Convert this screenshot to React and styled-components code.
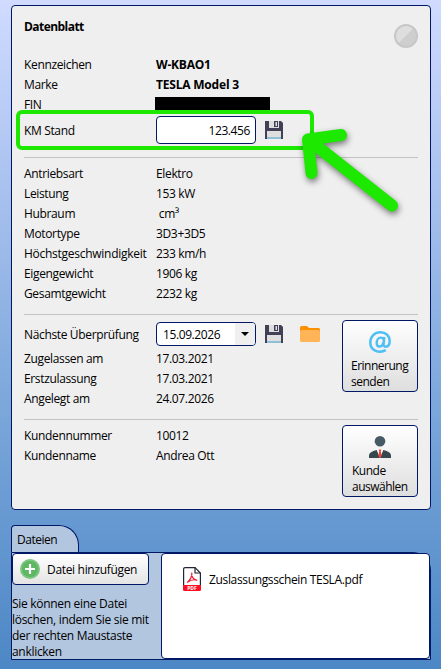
import React from 'react'
import styled, { createGlobalStyle } from 'styled-components'

const navy = '#001866'
const green = '#1de800'

const GlobalStyle = createGlobalStyle`
    * {
        box-sizing: border-box;
    }
    body {
        margin: 0;
        font-family: "Open Sans", "Noto Sans", sans-serif;
        font-size: 12px;
        letter-spacing: -0.3px;
        color: #000;
    }
    svg {
        display: block;
        flex: none;
    }
`
const Page = styled.div`
    height: 669px;
    padding: 5px 10px 9px 11px;
    overflow: hidden;
    background: linear-gradient(#d0dbff 0%, #a2bdec 33%, #7aa6da 62%, #4c87c5 100%);
`
const Card = styled.section`
    position: relative;
    height: 505px;
    padding: 0 12px;
    border: 1px solid ${navy};
    border-radius: 4px;
    background: #efefef;
`
const CardHeader = styled.header`
    display: flex;
    justify-content: space-between;
    height: 48px;
    padding-top: 11px;
`
const Title = styled.h1`
    margin: 0;
    font-size: 12px;
    line-height: 20px;
    font-weight: 700;
    letter-spacing: -0.55px;
`
const Status = styled.span`
    width: 24px;
    height: 24px;
    margin-top: 7px;
    border: 2px solid #c7c7c7;
    border-radius: 50%;
    background: linear-gradient(135deg, #dedede 50%, #cecece 50%);
`
const Section = styled.div`
    display: flex;
    justify-content: space-between;
    height: ${p => p.$height}px;
    padding-top: ${p => p.$top}px;
    border-bottom: ${p => (p.$last ? 'none' : '1px solid #c3c3c3')};
`
const Rows = styled.div`
    flex: 1;
`
const Row = styled.div`
    display: grid;
    grid-template-columns: 132px 1fr;
    align-items: center;
    height: ${p => p.$height || 20}px;
    white-space: pre;
`
const Label = styled.span`
    padding-top: 2px;
    line-height: 18px;
    letter-spacing: ${p => p.$spacing || -0.35}px;
`
const Value = styled.span`
    padding-top: 2px;
    line-height: 18px;
    font-weight: ${p => (p.$bold ? 700 : 400)};
    letter-spacing: ${p => (p.$bold ? -0.2 : -0.35)}px;
`
const Redacted = styled.span`
    align-self: end;
    width: 115px;
    height: 17px;
    margin-left: -1px;
    background: #000;
`
const Controls = styled.div`
    display: flex;
    align-items: center;
`
const Field = styled.div`
    display: flex;
    align-items: center;
    justify-content: ${p => (p.$numeric ? 'flex-end' : 'space-between')};
    width: 100px;
    height: ${p => p.$height}px;
    padding: ${p => (p.$numeric ? '0 5px 0 0' : '0 0 0 6px')};
    border: 1px solid ${navy};
    border-radius: 4px;
    background: #fff;
    letter-spacing: -0.4px;
    overflow: hidden;
`
const Drop = styled.span`
    display: flex;
    align-items: center;
    justify-content: center;
    width: 20px;
    height: 100%;
    background: #efefef;
`
const IconSlot = styled.span`
    margin-left: ${p => p.$gap}px;
`
const TileButton = styled.button`
    width: 76px;
    height: 72px;
    padding: 8px 0 0 ${p => p.$left}px;
    border: 1px solid ${navy};
    border-radius: 4px;
    background: linear-gradient(#fff, #dedede);
    font: inherit;
    line-height: 16px;
    letter-spacing: -0.5px;
    text-align: left;
    white-space: pre-line;
    svg {
        margin: 0 0 5px ${p => 26 - p.$left}px;
    }
`
const Highlight = styled.div`
    position: absolute;
    left: 4px;
    top: 104px;
    width: 298px;
    height: 40px;
    border: 4px solid ${green};
    border-radius: 6px;
`
const Arrow = styled.svg`
    position: absolute;
    left: 278px;
    top: 114px;
    filter: drop-shadow(1px 3px 3px rgba(0, 0, 0, 0.5));
`
const Tab = styled.div`
    width: 68px;
    height: 27px;
    margin-top: 15px;
    padding-left: 5px;
    border: 1px solid ${navy};
    border-bottom: none;
    border-radius: 4px 20px 0 0;
    background: #b2c6df;
    line-height: 28px;
    letter-spacing: -0.5px;
`
const Files = styled.section`
    display: flex;
    justify-content: space-between;
    height: 108px;
    border: 1px solid ${navy};
    border-radius: 0 18px 0 0;
    background: #b2c6df;
`
const Side = styled.div`
    width: 140px;
`
const AddButton = styled.button`
    display: flex;
    align-items: center;
    gap: 7px;
    width: 137px;
    height: 32px;
    padding: 0 0 0 7px;
    border: 1px solid ${navy};
    border-radius: 4px;
    background: linear-gradient(#fff, #e4e4e4);
    font: inherit;
    letter-spacing: -0.32px;
    white-space: nowrap;
`
const Hint = styled.p`
    margin: 11px 0 0;
    line-height: 16px;
    letter-spacing: -0.3px;
    white-space: pre-line;
`
const FileList = styled.div`
    width: 269px;
    height: 106px;
    padding: 13px 0 0 21px;
    border: 1px solid ${navy};
    border-radius: 4px;
    background: #fff;
`
const FileItem = styled.div`
    display: flex;
    align-items: center;
    gap: 8px;
    letter-spacing: -0.35px;
`

const SaveIcon = () => (
    <svg width="18" height="18" viewBox="0 0 18 18">
        <path d="M0 0h16l2 2v16H0z" fill="#424057" />
        <path d="M4 0h10v7H4z" fill="#dededf" />
        <path d="M9 0h4v6H9z" fill="#424057" />
        <path d="M10.5 1h1.5v4h-1.5z" fill="#dededf" />
        <path d="M2 10h14v6H2z" fill="#dededf" />
        <path d="M2 16h14v2H2z" fill="#8fc0d5" />
    </svg>
)

const FolderIcon = () => (
    <svg width="20" height="16" viewBox="0 0 20 16">
        <path d="M1.5 0H7l2 2h9.5Q20 2 20 3.500V9H0V1.500Q0 0 1.500 0z" fill="#ff8f00" />
        <path d="M1.500 4h17Q20 4 20 5.500v9q0 1.500-1.500 1.500h-17Q0 16 0 14.500v-9Q0 4 1.500 4z" fill="#ffb458" />
    </svg>
)

const AtIcon = () => (
    <svg width="22" height="22" viewBox="0 0 22 22" fill="none" stroke="#4fc0f6">
        <path d="M16.800 19.200C9 23 1.300 19.300 1.300 11.500 1.300 5.500 5.600 1.300 11.500 1.300c5.400 0 9.200 3.600 9.200 8.500 0 3.800-1.800 5.900-4 5.900-1.900 0-2.300-1.300-2.100-3l.7-6.700" strokeWidth="2.500" />
        <path d="M14.700 8.800C14 6.900 12.900 6.600 11.800 6.600 9.400 6.600 7.700 8.900 7.700 12c0 2.200 1 3.500 2.700 3.500 2 0 3.500-1.500 3.900-3.700" strokeWidth="2.400" />
    </svg>
)

const PersonIcon = () => (
    <svg width="22" height="22" viewBox="0 0 22 22">
        <circle cx="11" cy="5.300" r="5.300" fill="#455a64" />
        <path d="M0 22v-2.500C0 16.500 4 15 7.500 14h7c3.500 1 7.500 2.500 7.500 5.500V22z" fill="#37474f" />
        <path d="M7.500 13.500L11 22l3.500-8.500z" fill="#fff" />
        <path d="M9.600 13.500h2.800l-.6 2 .8 4.500L11 22l-1.600-2 .8-4.500z" fill="#f44336" />
    </svg>
)

const PlusIcon = () => (
    <svg width="20" height="20" viewBox="0 0 20 20">
        <circle cx="10" cy="10" r="10" fill="#7bc67e" />
        <circle cx="10" cy="10" r="8" fill="#5fb763" />
        <path d="M10 5v10M5 10h10" stroke="#fff" strokeWidth="2.200" />
    </svg>
)

const PdfIcon = () => (
    <svg width="18" height="24" viewBox="0 0 18 24">
        <path d="M.6 18V2.100Q.6.600 2.100.600H12l5.400 5.400v12" fill="#fff" stroke="#222533" strokeWidth="1.200" />
        <path d="M12 .6V6h5.400" fill="none" stroke="#222533" strokeWidth="1.200" />
        <path d="M4.500 15.200c2.200-1.800 5-6 4.300-9.200-.9 2.600 1.300 6.800 5 7.200-3-1-6.800.2-9.300 2z" fill="none" stroke="#f5152c" strokeWidth="1.200" strokeLinejoin="round" />
        <path d="M0 18h18v4.500Q18 24 16.500 24h-15Q0 24 0 22.500z" fill="#ff0f23" />
        <text x="9" y="23" textAnchor="middle" fontSize="5" fontWeight="700" letterSpacing="0" fill="#fff">PDF</text>
    </svg>
)

const specs = [
    ['Antriebsart', 'Elektro'],
    ['Leistung', '153 kW'],
    ['Hubraum', ' cm³'],
    ['Motortype', '3D3+3D5'],
    ['Höchstgeschwindigkeit', '233 km/h'],
    ['Eigengewicht', '1906 kg'],
    ['Gesamtgewicht', '2232 kg'],
]

const dates = [
    ['Zugelassen am', '17.03.2021'],
    ['Erstzulassung', '17.03.2021'],
    ['Angelegt am', '24.07.2026'],
]

const customer = [
    ['Kundennummer', '10012'],
    ['Kundenname', 'Andrea Ott'],
]

const DataRows = ({ items, bold }) =>
    items.map(([label, value]) => (
        <Row key={label}>
            <Label $spacing={label.length > 20 ? -0.27 : undefined}>{label}</Label>
            <Value $bold={bold}>{value}</Value>
        </Row>
    ))

const App = () => {
    return (
        <>
            <GlobalStyle />
            <Page>
                <Card>
                    <CardHeader>
                        <Title>Datenblatt</Title>
                        <Status />
                    </CardHeader>
                    <Section $height={104} $top={0}>
                        <Rows>
                            <DataRows items={[['Kennzeichen', 'W-KBAO1'], ['Marke', 'TESLA Model 3']]} bold />
                            <Row>
                                <Label>FIN</Label>
                                <Redacted />
                            </Row>
                            <Row $height={32}>
                                <Label>KM Stand</Label>
                                <Controls>
                                    <Field $numeric $height={28}>123.456</Field>
                                    <IconSlot $gap={9}><SaveIcon /></IconSlot>
                                </Controls>
                            </Row>
                        </Rows>
                    </Section>
                    <Section $height={157} $top={5}>
                        <Rows>
                            <DataRows items={specs} />
                        </Rows>
                    </Section>
                    <Section $height={105} $top={5}>
                        <Rows>
                            <Row $height={28}>
                                <Label>Nächste Überprüfung</Label>
                                <Controls>
                                    <Field $height={24}>
                                        15.09.2026
                                        <Drop>
                                            <svg width="8" height="4" viewBox="0 0 8 4"><path d="M0 0h8L4 4z" /></svg>
                                        </Drop>
                                    </Field>
                                    <IconSlot $gap={9}><SaveIcon /></IconSlot>
                                    <IconSlot $gap={17}><FolderIcon /></IconSlot>
                                </Controls>
                            </Row>
                            <DataRows items={dates} />
                        </Rows>
                        <TileButton $left={8}><AtIcon />{'Erinnerung\nsenden'}</TileButton>
                    </Section>
                    <Section $height={80} $top={5} $last>
                        <Rows>
                            <DataRows items={customer} />
                        </Rows>
                        <TileButton $left={9}><PersonIcon />{'Kunde\nauswählen'}</TileButton>
                    </Section>
                    <Highlight />
                    <Arrow width="120" height="100" viewBox="290 120 120 100" fill="none" stroke={green} strokeWidth="12" strokeLinecap="round" strokeLinejoin="round">
                        <path d="M341 135l-33 4.500 3.500 33.500M309 140l83 65.500" />
                    </Arrow>
                </Card>
                <Tab>Dateien</Tab>
                <Files>
                    <Side>
                        <AddButton><PlusIcon />Datei hinzufügen</AddButton>
                        <Hint>{'Sie können eine Datei\nlöschen, indem Sie sie mit\nder rechten Maustaste\nanklicken'}</Hint>
                    </Side>
                    <FileList>
                        <FileItem><PdfIcon />Zuslassungsschein TESLA.pdf</FileItem>
                    </FileList>
                </Files>
            </Page>
        </>
    )
}

export default App
